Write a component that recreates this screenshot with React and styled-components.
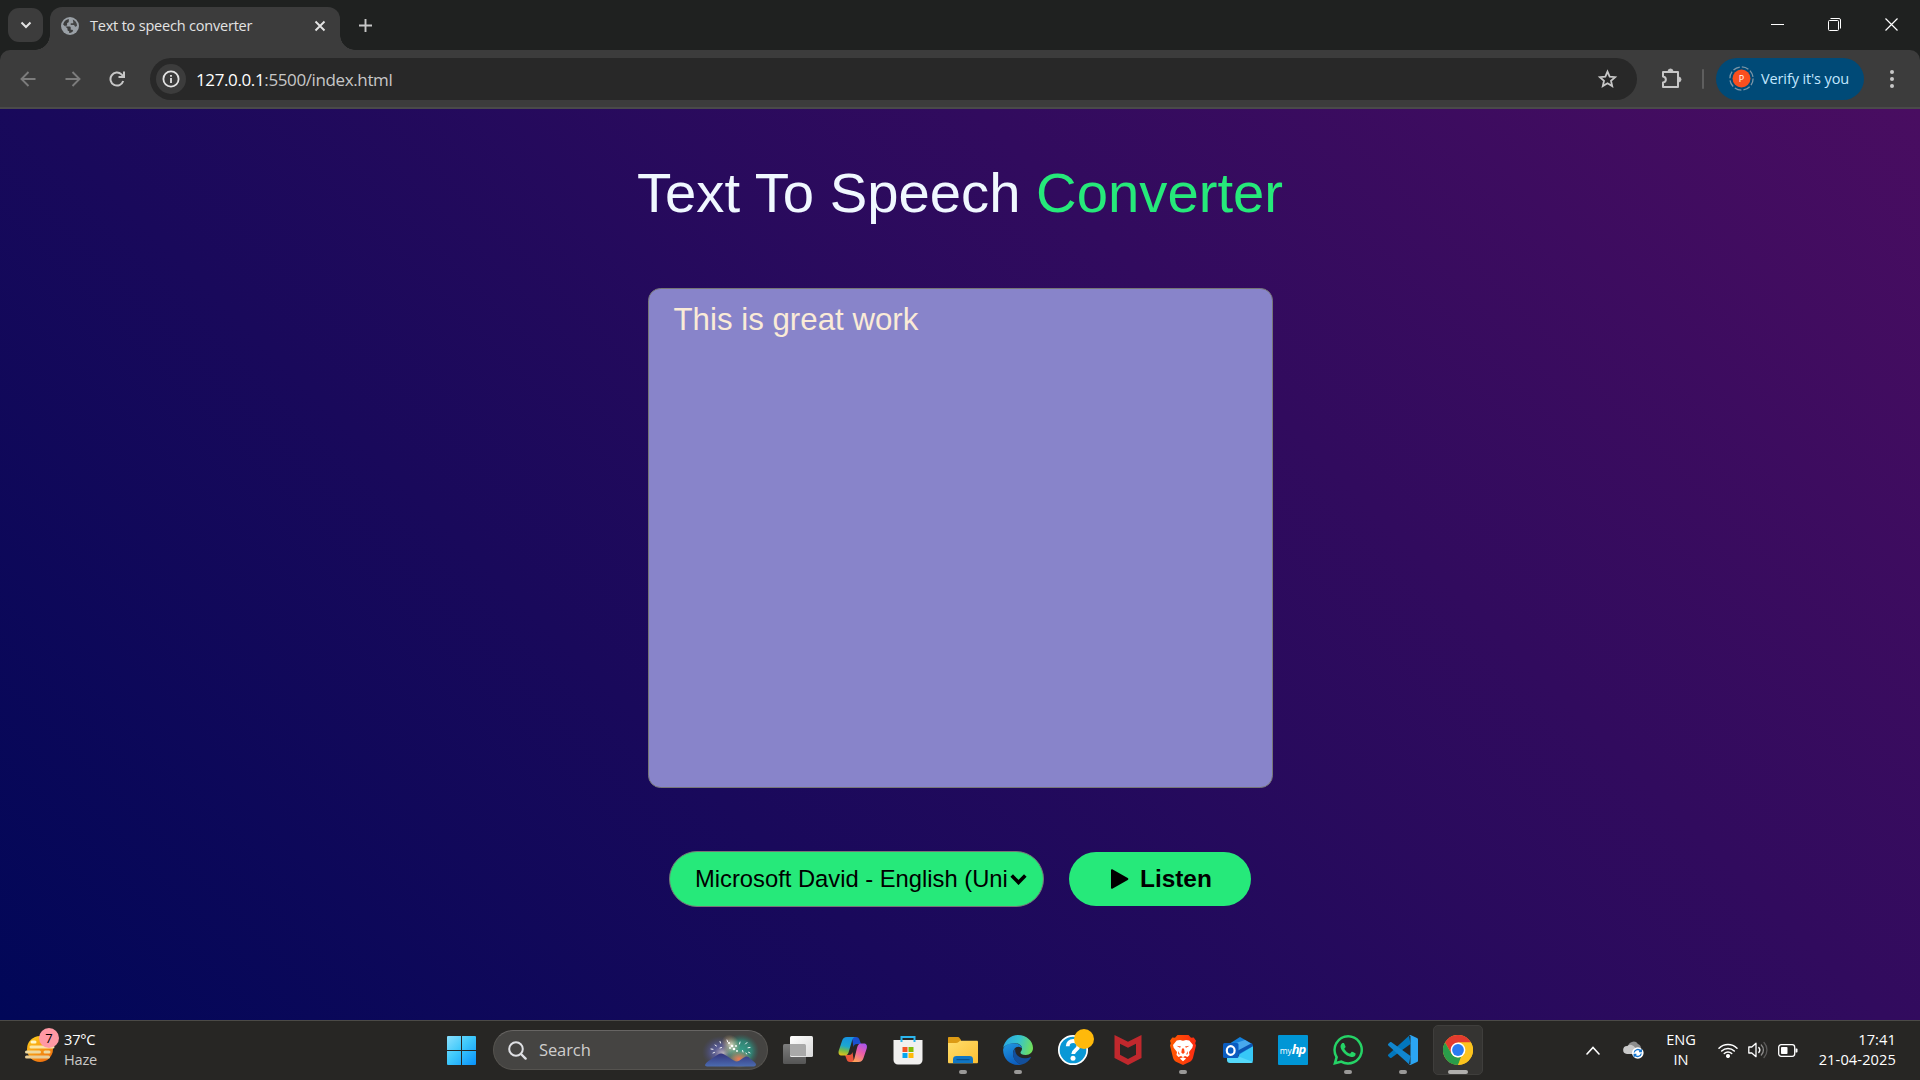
import React from 'react';
import styled, { createGlobalStyle, css } from 'styled-components';

const GlobalStyle = createGlobalStyle`
  *, *::before, *::after { box-sizing: border-box; }
  html, body { margin: 0; padding: 0; background: #1f2120; overflow: hidden; }
  svg { display: block; flex: none; }
`;

const uiFont = css`font-family: "Open Sans", "Noto Sans", sans-serif;`;
const pageFont = css`font-family: "Liberation Sans", Arial, sans-serif;`;

const Screen = styled.div`
  width: 1920px;
  height: 1080px;
  display: flex;
  flex-direction: column;
  overflow: hidden;
`;

/* ---------- browser chrome ---------- */
const TabStrip = styled.header`
  height: 50px;
  flex: none;
  display: flex;
  align-items: flex-end;
  background: #1f2120;
  padding-left: 8px;
`;
const TabSearch = styled.button`
  width: 35px;
  height: 34px;
  margin: 0 7px 8px 0;
  padding: 0;
  border: 0;
  border-radius: 11px;
  background: #3c3c3c;
  display: grid;
  place-items: center;
`;
const Tab = styled.div`
  position: relative;
  width: 290px;
  height: 43px;
  border-radius: 12px 12px 0 0;
  background: #3c3c3c;
  display: flex;
  align-items: center;
  padding: 0 14px 6px 11px;
  &::before, &::after {
    content: '';
    position: absolute;
    bottom: 0;
    width: 15px;
    height: 15px;
  }
  &::before { left: -15px; background: radial-gradient(circle at 0 0, transparent 14.5px, #3c3c3c 15px); }
  &::after { right: -15px; background: radial-gradient(circle at 100% 0, transparent 14.5px, #3c3c3c 15px); }
`;
const TabTitle = styled.span`
  ${uiFont}
  flex: 1;
  margin-left: 11px;
  font-size: 14.5px;
  line-height: 20px;
  letter-spacing: -0.2px;
  color: #e3e3e3;
  white-space: nowrap;
`;
const NewTab = styled.div`
  width: 28px;
  height: 50px;
  margin-left: 11px;
  display: grid;
  place-items: center;
`;
const WindowControls = styled.div`
  margin-left: auto;
  height: 50px;
  display: flex;
`;
const WindowButton = styled.div`
  width: 57px;
  height: 49px;
  display: grid;
  place-items: center;
`;
const ToolbarBack = styled.div`
  height: 59px;
  flex: none;
  background: #1f2120;
`;
const Toolbar = styled.div`
  height: 59px;
  background: #3c3c3c;
  border-bottom: 2px solid #4a4a4a;
  border-radius: 10px 10px 0 0;
  display: flex;
  align-items: center;
  padding-left: 5px;
`;
const NavButton = styled.div`
  width: 45px;
  height: 57px;
  display: grid;
  place-items: center;
`;
const Omnibox = styled.div`
  width: 1487px;
  height: 42px;
  margin-left: 10px;
  border-radius: 21px;
  background: #282828;
  display: flex;
  align-items: center;
  padding: 0 19px 0 6px;
`;
const SiteInfo = styled.span`
  width: 30px;
  height: 30px;
  border-radius: 50%;
  background: #3c3c3c;
  display: grid;
  place-items: center;
`;
const Url = styled.span`
  ${uiFont}
  flex: 1;
  margin: 2px 0 0 10px;
  font-size: 17px;
  line-height: 24px;
  letter-spacing: -0.38px;
  color: #c7c7c7;
  b { font-weight: 400; color: #ffffff; }
`;
const Extensions = styled.div`
  width: 65px;
  display: flex;
  justify-content: center;
  padding-left: 5px;
`;
const Divider = styled.span`
  width: 2px;
  height: 20px;
  border-radius: 1px;
  background: #5e5e5e;
`;
const ProfileChip = styled.div`
  width: 148px;
  height: 42px;
  margin: 0 0 0 12px;
  border-radius: 21px;
  background: #004a77;
  display: flex;
  align-items: center;
  padding-left: 13px;
  gap: 7px;
`;
const ChipText = styled.span`
  ${uiFont}
  font-size: 14.5px;
  line-height: 20px;
  letter-spacing: -0.12px;
  color: #c2e7ff;
  white-space: nowrap;
`;
const Avatar = styled.span`
  position: relative;
  width: 25px;
  height: 25px;
  display: grid;
  place-items: center;
  svg { position: absolute; inset: 0; }
`;
const AvatarLetter = styled.span`
  ${uiFont}
  z-index: 1;
  font-size: 9px;
  line-height: 12px;
  color: #ffffff;
`;
const MenuDots = styled.div`
  width: 56px;
  display: grid;
  place-items: center;
`;

/* ---------- page ---------- */
const Page = styled.main`
  ${pageFont}
  height: 911px;
  flex: none;
  background: linear-gradient(45deg, #010758, #490d61);
  display: flex;
  flex-direction: column;
  align-items: center;
`;
const Heading = styled.h1`
  margin: 52px 0 0;
  height: 64px;
  font-size: 56.25px;
  line-height: 64px;
  font-weight: 400;
  color: aliceblue;
  white-space: nowrap;
  span { color: #26e97a; }
`;
const TextBox = styled.div`
  width: 625px;
  height: 500px;
  margin-top: 63px;
  padding: 13px 25px;
  border: 1px solid #767676;
  border-radius: 12.5px;
  background: #8884ca;
  font-size: 31.25px;
  line-height: 36px;
  color: antiquewhite;
`;
const Controls = styled.div`
  display: flex;
  align-items: center;
  gap: 25px;
  margin-top: 63px;
`;
const VoiceSelect = styled.div`
  width: 375px;
  height: 56px;
  border: 1px solid #767676;
  border-radius: 28px;
  background: #26e97a;
  display: flex;
  align-items: center;
  padding: 0 16px 0 25px;
`;
const VoiceName = styled.span`
  width: 315px;
  white-space: nowrap;
  font-size: 23.75px;
  line-height: 30px;
  color: #000;
`;
const ListenButton = styled.button`
  ${pageFont}
  width: 182px;
  height: 54px;
  padding: 0 0 1px 42px;
  border: 0;
  border-radius: 27px;
  background: #26e97a;
  display: flex;
  align-items: center;
  gap: 11px;
  font-size: 24.4px;
  font-weight: 700;
  line-height: 30px;
  color: #000;
`;

/* ---------- taskbar ---------- */
const Taskbar = styled.footer`
  height: 60px;
  flex: none;
  display: flex;
  align-items: center;
  padding-bottom: 1px;
  background: #272624;
  border-top: 1px solid #4b4a47;
`;
const Weather = styled.div`
  width: 447px;
  display: flex;
  align-items: center;
  padding-left: 25px;
  gap: 5px;
`;
const WeatherIcon = styled.div`
  position: relative;
  width: 34px;
  height: 40px;
`;
const Badge = styled.span`
  ${uiFont}
  position: absolute;
  left: 14px;
  top: -2px;
  width: 20px;
  height: 20px;
  border-radius: 50%;
  background: #ff99a4;
  font-size: 13px;
  line-height: 20px;
  text-align: center;
  color: #000;
`;
const Lines = styled.div`
  ${uiFont}
  width: ${(p) => p.$width || 'auto'};
  margin-top: -2px;
  display: flex;
  flex-direction: column;
  text-align: ${(p) => p.$align || 'left'};
  font-size: 14.6px;
  line-height: 20px;
  letter-spacing: ${(p) => p.$track || '-0.2px'};
  color: #fff;
  white-space: nowrap;
`;
const Muted = styled.span`color: #c9c8c7;`;
const SearchBox = styled.div`
  width: 275px;
  height: 40px;
  margin: 0 2px 0 17px;
  border: 1px solid #55534f;
  border-top-color: #676563;
  border-radius: 20px;
  background: #454442;
  display: flex;
  align-items: center;
  padding: 0 7px 0 14px;
  span {
    ${uiFont}
    flex: 1;
    margin-left: 12px;
    font-size: 16.5px;
    line-height: 24px;
    letter-spacing: -0.1px;
    color: #cfcecd;
  }
`;
const AppSlot = styled.div`
  width: 55px;
  height: 58px;
  display: flex;
  justify-content: center;
  align-items: center;
`;
const AppTile = styled.div`
  position: relative;
  width: 50px;
  height: 50px;
  border-radius: 5px;
  border: 1px solid ${(p) => (p.$active ? '#3f3e3c' : 'transparent')};
  background: ${(p) => (p.$active ? '#353432' : 'transparent')};
  display: grid;
  place-items: center;
`;
const Running = styled.span`
  position: absolute;
  bottom: 0;
  left: 50%;
  width: ${(p) => (p.$active ? '20px' : '8px')};
  height: 4px;
  border-radius: 2px;
  background: ${(p) => (p.$active ? '#b0afad' : '#9a9998')};
  transform: translateX(-50%);
`;
const Tray = styled.div`
  flex: 1;
  display: flex;
  align-items: center;
  padding-left: 101px;
`;
const TrayItem = styled.span`
  margin-left: ${(p) => p.$gap}px;
  display: block;
`;
const HpLogo = styled.div`
  ${uiFont}
  width: 30px;
  height: 30px;
  background: #0096d6;
  border-radius: 1px;
  color: #fff;
  display: flex;
  align-items: baseline;
  justify-content: center;
  font-size: 8.5px;
  line-height: 28px;
  font-weight: 400;
  i { font-size: 13px; letter-spacing: -1px; font-weight: 700; }
`;

const Stroke = ({ w, h = w, d, color = '#c7c7c7', sw = 2, cap = 'butt' }) => (
  <svg width={w} height={h} viewBox={`0 0 ${w} ${h}`} fill="none" stroke={color} strokeWidth={sw} strokeLinecap={cap}>
    <path d={d} />
  </svg>
);

const Globe = () => (
  <svg width="18" height="18" viewBox="0 0 18 18">
    <circle cx="9" cy="9" r="9" fill="#9aa0a6" />
    <path d="M7.8 1.9v2.400c0 1-.8 1.700-1.700 1.700v1.700c0 .6-.4 1-.9 1H4.100v.9h4.700c.5 0 .9.4.9.9v2.200h.9c.8 0 1.400.5 1.600 1.200A7 7 0 0 1 9 16c-.5 0-.8 0-.8-.1v-1.700c-1 0-1.700-.8-1.700-1.700v-.9L2.100 7.400A7.200 7.200 0 0 1 7.800 1.900z" fill="#3c3c3c" />
    <path d="M11.800 2.600c2.400 1 4.100 3.200 4.300 6-.5 1-1.300 1.300-2.100.9l-1-1.500H9.700V6.300h1.700c.5 0 .9-.4.900-.900z" fill="#3c3c3c" opacity=".9" />
  </svg>
);

const WeatherSun = () => (
  <svg width="34" height="40" viewBox="0 0 34 40">
    <defs>
      <linearGradient id="sun" x1="0" y1="0" x2=".6" y2="1"><stop offset="0" stopColor="#ffd21c" /><stop offset="1" stopColor="#f0730f" /></linearGradient>
    </defs>
    <circle cx="15" cy="19" r="13" fill="url(#sun)" />
    <g stroke="#fbe6a6" strokeWidth="3" strokeLinecap="round">
      <path d="M7 12h3" stroke="#fff6c9" /><path d="M6 17h22" /><path d="M1.500 22h13M20 22h4" stroke="#edd9a0" /><path d="M1.500 27h22" stroke="#e9cd95" />
    </g>
  </svg>
);

const WinLogo = () => (
  <svg width="29" height="29" viewBox="0 0 29 29">
    <defs><linearGradient id="win" x1="0" y1="0" x2="1" y2="1"><stop offset="0" stopColor="#8be0fd" /><stop offset=".45" stopColor="#3fc9fb" /><stop offset="1" stopColor="#0791fb" /></linearGradient></defs>
    <path d="M1 0h13v14H0V1a1 1 0 0 1 1-1zM15 0h13a1 1 0 0 1 1 1v13H15zM0 15h14v14H1a1 1 0 0 1-1-1zM15 15h14v13a1 1 0 0 1-1 1H15z" fill="url(#win)" />
  </svg>
);

const Fireworks = () => (
  <svg width="58" height="38" viewBox="0 0 58 38">
    <defs>
      <radialGradient id="fwA"><stop offset="0" stopColor="#686cae" /><stop offset=".5" stopColor="#55588f" stopOpacity=".85" /><stop offset="1" stopColor="#454870" stopOpacity="0" /></radialGradient>
      <radialGradient id="fwB"><stop offset="0" stopColor="#35a08a" /><stop offset=".6" stopColor="#2f8b7b" stopOpacity=".85" /><stop offset="1" stopColor="#2f6b62" stopOpacity="0" /></radialGradient>
      <radialGradient id="fwC"><stop offset="0" stopColor="#fff0d4" /><stop offset="1" stopColor="#e1b87c" stopOpacity="0" /></radialGradient>
      <radialGradient id="fwD"><stop offset="0" stopColor="#f07a52" /><stop offset="1" stopColor="#e0825c" stopOpacity="0" /></radialGradient>
      <linearGradient id="fwM" x1="0" y1="0" x2="0" y2="1"><stop offset="0" stopColor="#33347c" /><stop offset="1" stopColor="#4c6cb0" /></linearGradient>
    </defs>
    <ellipse cx="18" cy="21" rx="18" ry="16" fill="url(#fwA)" />
    <ellipse cx="39" cy="20" rx="18" ry="17" fill="url(#fwB)" />
    <ellipse cx="21" cy="22" rx="9" ry="7" fill="url(#fwC)" opacity=".55" />
    <ellipse cx="29" cy="14" rx="9" ry="11" fill="url(#fwC)" opacity=".8" transform="rotate(-35 29 14)" />
    <ellipse cx="37" cy="28" rx="12" ry="9" fill="url(#fwD)" />
    <path d="M3 34c1-3 6-5.500 10-8.500 2-1.500 4-3 6-3s5 2 8 4 6 4 8 4 5-3 8-4.500c2-1 4 0 5 1.500 2 2 6 4 6 6 0 1.500-1.500 2-3 2H7c-2.500 0-4 0-4-1.500z" fill="url(#fwM)" />
    <g stroke="#fff" strokeWidth="1" strokeLinecap="round" opacity=".95">
      <path d="M18 10.500l.5 1.500M13 14l1.500 1M9 18l2 .3M11 22l1.500-.6M18 17l1.500-.5M25 9l.6 1.800M38 11l-.5 2M45 11.500l-1.500 1.500M48 16.500l-2 .3M48 22l-1.500-.8M41 21l-.4-1.500M44 22l.6 1" />
    </g>
    <g fill="#fff">
      <circle cx="27" cy="12" r="1" /><circle cx="30" cy="15" r="1.300" /><circle cx="32" cy="18" r="1.300" /><circle cx="28" cy="17" r=".9" /><circle cx="34" cy="15" r=".9" /><circle cx="35" cy="20" r=".9" />
    </g>
  </svg>
);

const TaskView = () => (
  <svg width="30" height="30" viewBox="0 0 30 30">
    <defs><linearGradient id="tv" x1="0" y1="0" x2="1" y2="1"><stop offset="0" stopColor="#fff" /><stop offset="1" stopColor="#d9d9d9" /></linearGradient>
      <linearGradient id="tg" x1="0" y1="0" x2="0" y2="1"><stop offset="0" stopColor="#7d7d7d" /><stop offset="1" stopColor="#555" /></linearGradient></defs>
    <rect x="0" y="9" width="23" height="20" rx="1.500" fill="url(#tg)" />
    <rect x="7" y="1" width="23" height="21" rx="1.500" fill="url(#tv)" />
    <path d="M7 9h14.500a1.500 1.500 0 0 1 1.500 1.500V21H8.500A1.500 1.500 0 0 1 7 19.500z" fill="#a9a9a9" />
  </svg>
);

const Copilot = () => (
  <svg width="30" height="30" viewBox="0 0 30 30">
    <defs>
      <linearGradient id="cpA" x1=".3" y1="0" x2=".1" y2="1"><stop offset="0" stopColor="#1793e0" /><stop offset=".45" stopColor="#1ca7cf" /><stop offset=".7" stopColor="#72bb4c" /><stop offset="1" stopColor="#f2c412" /></linearGradient>
      <linearGradient id="cpB" x1=".8" y1="0" x2=".3" y2="1"><stop offset="0" stopColor="#a855ee" /><stop offset=".45" stopColor="#e95caa" /><stop offset="1" stopColor="#ffa357" /></linearGradient>
    </defs>
    <path d="M14 2h4c2 0 3 1 3.600 3l1.400 4h-4c-2 0-3 1-3.600 3z" fill="#1a50d0" />
    <path d="M16 27h-4c-2 0-3-1-3.500-3L7 20h4c2 0 3-1 3.500-3z" fill="#e8553a" />
    <path d="M9 2h8.500c-2 0-2.800 1.600-3.400 3.500L11 16c-.8 2.800-1.700 4.500-4 4.500H4c-3 0-4-2-3.200-5L4 6c.9-2.700 2.200-4 5-4z" fill="url(#cpA)" />
    <path d="M20.500 27H13c2 0 2.800-1.500 3.400-3.500L19 13c.8-2.800 1.700-4.500 4-4.500h2.500c3 0 4 2 3.200 5L25.500 23c-.9 2.700-2.200 4-5 4z" fill="url(#cpB)" />
  </svg>
);

const Store = () => (
  <svg width="30" height="30" viewBox="0 0 30 30">
    <path d="M0.500 5h29v20a4.500 4.500 0 0 1-4.500 4.500H5A4.500 4.500 0 0 1 .5 25z" fill="#f1f0ef" />
    <path d="M8.500 7V2h13v5" fill="none" stroke="#2bb6ee" strokeWidth="2" />
    <path d="M9.500 12h5v5h-5z" fill="#f35325" /><path d="M15.500 12h5v5h-5z" fill="#81bc06" /><path d="M9.500 18h5v5h-5z" fill="#05a6f0" /><path d="M15.500 18h5v5h-5z" fill="#ffba08" />
  </svg>
);

const Explorer = () => (
  <svg width="30" height="30" viewBox="0 0 30 30">
    <defs><linearGradient id="ex" x1="0" y1="0" x2="1" y2="1"><stop offset="0" stopColor="#ffdd6b" /><stop offset="1" stopColor="#fcbf33" /></linearGradient></defs>
    <path d="M0 3c0-.6.500-1 1-1h8.500c1 0 1.500.3 2 1l1.500 2v6H0z" fill="#dc9a14" />
    <path d="M0 8h8c1 0 1.800-.3 2.600-1l1.400-1.200h16.800c.7 0 1.200.4 1.200 1.200v20c0 .8-.5 1.300-1.300 1.300H1.300C.5 28.300 0 27.800 0 27z" fill="url(#ex)" />
    <path d="M5 28.300v-4A3.500 3.500 0 0 1 8.500 21h13a3.500 3.500 0 0 1 3.500 3.300v4z" fill="#1076c4" />
    <path d="M8.500 24.700h13" stroke="#064a86" strokeWidth="1" />
  </svg>
);

const Edge = () => (
  <svg width="30" height="30" viewBox="0 0 30 30">
    <defs>
      <linearGradient id="edA" x1="0" y1=".3" x2="1" y2=".5"><stop offset="0" stopColor="#2aa6e2" /><stop offset=".5" stopColor="#35c3cf" /><stop offset="1" stopColor="#71e05a" /></linearGradient>
      <linearGradient id="edB" x1=".2" y1="0" x2=".6" y2="1"><stop offset="0" stopColor="#1f95df" /><stop offset="1" stopColor="#0b5bbd" /></linearGradient>
    </defs>
    <path d="M.2 13C1.300 5.700 7.300 0 15 0c8.500 0 15 6 15 13 0 4-3 7-7.300 7-3.700 0-5.200-1.300-5.200-2.500 0-.8 1.500-1.600 1.500-4 0-2.700-2.800-5.200-7-5.200C6.500 8.300 2 10.500.2 13z" fill="url(#edA)" />
    <path d="M.1 14.500C1 10.300 5.800 8.300 11 8.300c4.800 0 8 2.500 8 5 0 0-1.700-1.600-3.700-1.600C12.500 11.700 10 14.500 10 18.500 10 24 14 29 19.500 29.200 18 29.700 16.600 30 15 30 6.700 30 .1 23.500.1 15z" fill="url(#edB)" />
    <path d="M12.200 13.500C10.700 15 10 16.800 10 19c0 5.500 4.200 10.300 9.800 10.300 3.500-1.200 6.200-3.600 7.900-6.300.4-.8-.2-1.100-.8-.8-1.300.7-3 1.100-5 1.100-5.200 0-9.700-3.500-9.700-8z" fill="#134f9b" />
  </svg>
);

const Help = () => (
  <svg width="44" height="44" viewBox="-3 -3 44 44">
    <circle cx="19" cy="19" r="14.200" fill="#0a98d6" stroke="#fff" strokeWidth="1.700" />
    <path d="M13.700 15.200c0-3.300 2.300-5.200 5.500-5.200s5.300 1.900 5.300 4.700c0 4.200-5.300 4.300-5.300 8.300" fill="none" stroke="#fff" strokeWidth="3.800" />
    <circle cx="19" cy="27.200" r="2.500" fill="#fff" />
    <circle cx="30" cy="8" r="10" fill="#ffb90b" />
  </svg>
);

const McAfee = () => (
  <svg width="30" height="30" viewBox="0 0 30 30">
    <path d="M1.500 0L15 6.700 28.500 0v23L15 30 1.500 23zM7 8.800v11l8 4.200 8-4.200v-11l-8 4z" fill="#c0282d" fillRule="evenodd" />
  </svg>
);

const Brave = () => (
  <svg width="30" height="30" viewBox="0 0 30 30">
    <defs><linearGradient id="br" x1="0" y1="0" x2="1" y2="0"><stop offset="0" stopColor="#ff5a00" /><stop offset="1" stopColor="#fb2a12" /></linearGradient></defs>
    <path d="M9.500 0h11l2.500 2.700 2.700-.3L28 5.700l-.8 2.500.8 2.300-3 12.200c-.6 2-1.400 2.800-3 4L15 30l-7-3.300c-1.600-1.200-2.400-2-3-4L2 10.500l.8-2.300L2 5.700l2.300-3.300 2.700.3z" fill="url(#br)" />
    <path d="M15 5.800l3-.9 3.300.5 3.700 4.600-.7 2.700-3.300 4.400.5 3-2 1.800-2.500-1-2 1.300-2-1.300-2.500 1-2-1.800.5-3-3.300-4.400L5 10l3.700-4.600 3.300-.5zM15 22.200l3.200 1.300-3.200 2.700-3.200-2.700z" fill="#fff" />
    <path d="M8.500 10.800l4.500.6-1 1.400zM21.500 10.800l-4.500.6 1 1.400zM14 13.500h2l.7 4L15 19l-1.700-1.500zM10 16l2 3.500-1.700-.3zM20 16l-2 3.500 1.700-.3z" fill="#ff4512" />
  </svg>
);

const Outlook = () => (
  <svg width="30" height="30" viewBox="0 0 30 30">
    <path d="M6 9l11-7 11.500 6.500L30 11l-13 9L6 17z" fill="#1380dc" />
    <path d="M13 8l9-3 6.500 4L15 18z" fill="#48a9ee" />
    <path d="M30 11v14a3 3 0 0 1-3 3H10l7-9z" fill="#37c8f7" />
    <path d="M30 11L14 20v-4l15-8z" fill="#0b55b3" />
    <path d="M4 22h13l13 5c-.7.8-1.500 1-3 1H7a3 3 0 0 1-3-3z" fill="#55d9fa" />
    <rect x="0" y="8" width="15.500" height="15" rx="1.500" fill="#0a5cc0" />
    <ellipse cx="7.700" cy="15.500" rx="3.900" ry="4.400" fill="none" stroke="#fff" strokeWidth="2.200" />
  </svg>
);

const WhatsApp = () => (
  <svg width="30" height="30" viewBox="0 0 24 24" fill="#25d366">
    <path d="M17.472 14.382c-.297-.149-1.758-.867-2.030-.967-.273-.099-.471-.148-.670.150-.197.297-.767.966-.940 1.164-.173.199-.347.223-.644.075-.297-.150-1.255-.463-2.390-1.475-.883-.788-1.480-1.761-1.653-2.059-.173-.297-.018-.458.130-.606.134-.133.298-.347.446-.520.149-.174.198-.298.298-.497.099-.198.050-.371-.025-.520-.075-.149-.669-1.612-.916-2.207-.242-.579-.487-.500-.669-.510-.173-.008-.371-.010-.570-.010-.198 0-.520.074-.792.372-.272.297-1.040 1.016-1.040 2.479 0 1.462 1.065 2.875 1.213 3.074.149.198 2.096 3.200 5.077 4.487.709.306 1.262.489 1.694.625.712.227 1.360.195 1.871.118.571-.085 1.758-.719 2.006-1.413.248-.694.248-1.289.173-1.413-.074-.124-.272-.198-.570-.347" />
    <path fillRule="evenodd" d="M12.100 0A11.900 11.900 0 0 0 1.800 17.800L.1 24l6.300-1.650A11.900 11.900 0 1 0 12.100 0zm0 21.800a9.900 9.900 0 0 1-5-1.370l-.36-.21-3.740.98 1-3.650-.24-.37A9.900 9.900 0 1 1 12.100 21.800z" />
  </svg>
);

const VsCode = () => (
  <svg width="30" height="30" viewBox="0 0 30 30">
    <path d="M22.500 9L3.500 22.700c-.6.400-1 .4-1.500 0L.4 21.300c-.6-.5-.6-1.200 0-1.800L21 .8z" fill="#0277bd" />
    <path d="M22.500 21L3.500 7.300c-.6-.4-1-.4-1.500 0L.4 8.700c-.6.500-.6 1.200 0 1.800L21 29.200z" fill="#1186cf" />
    <path d="M22.500 0l6.500 3c.7.400 1 .8 1 1.600v20.800c0 .8-.3 1.200-1 1.600l-6.500 3c-.7.200-1.200 0-1.700-.6.800.5 1.700 0 1.700-1V1.600c0-1-.9-1.500-1.700-1 .5-.6 1-.8 1.700-.6z" fill="#2ba5f3" />
  </svg>
);

const ChromeLogo = () => (
  <svg width="30" height="30" viewBox="0 0 30 30">
    <circle cx="15" cy="15" r="15" fill="#fcc31e" />
    <path d="M2 7.500A15 15 0 0 1 28 7.500H15L8.500 18.700z" fill="#e33b2e" />
    <path d="M2 7.500L8.500 18.750a7.500 7.500 0 0 0 9.500 3L15 30A15 15 0 0 1 2 7.500z" fill="#2a9c4a" />
    <path d="M28 7.500A15 15 0 0 1 15 30l6.500-11.250L21.500 11 15 7.500z" fill="#fcc31e" />
    <circle cx="15" cy="15" r="7.400" fill="#fff" />
    <circle cx="15" cy="15" r="5.900" fill="#2a7bf0" />
  </svg>
);

const MyHp = () => (<HpLogo>my<i>hp</i></HpLogo>);

const apps = [
  { id: 'taskview', Icon: TaskView },
  { id: 'copilot', Icon: Copilot },
  { id: 'store', Icon: Store },
  { id: 'explorer', Icon: Explorer, running: true },
  { id: 'edge', Icon: Edge, running: true },
  { id: 'help', Icon: Help },
  { id: 'mcafee', Icon: McAfee },
  { id: 'brave', Icon: Brave, running: true },
  { id: 'outlook', Icon: Outlook },
  { id: 'myhp', Icon: MyHp },
  { id: 'whatsapp', Icon: WhatsApp, running: true },
  { id: 'vscode', Icon: VsCode, running: true },
  { id: 'chrome', Icon: ChromeLogo, running: true, active: true },
];

const BrowserChrome = () => (
  <>
    <TabStrip>
      <TabSearch><Stroke w={12} h={8} d="M1.500 1.500L6 6l4.500-4.500" color="#e3e3e3" sw={2} /></TabSearch>
      <Tab>
        <Globe />
        <TabTitle>Text to speech converter</TabTitle>
        <Stroke w={12} d="M1.500 1.500l9 9M10.500 1.500l-9 9" color="#e3e3e3" sw={1.900} />
      </Tab>
      <NewTab><Stroke w={13} d="M6.500 0v13M0 6.500h13" sw={1.900} /></NewTab>
      <WindowControls>
        <WindowButton><Stroke w={13} h={1} d="M0 .5h13" color="#fff" sw={1} /></WindowButton>
        <WindowButton>
          <svg width="14" height="13" viewBox="0 0 14 13" fill="none" stroke="#fff">
            <rect x=".5" y="2.500" width="10" height="10" rx="1" />
            <path d="M2.500 .5H11A1.500 1.500 0 0 1 12.500 2v8.500" />
          </svg>
        </WindowButton>
        <WindowButton><Stroke w={13} d="M.5 .5l12 12M12.500 .5l-12 12" color="#fff" sw={1.200} /></WindowButton>
      </WindowControls>
    </TabStrip>
    <ToolbarBack>
      <Toolbar>
        <NavButton><Stroke w={16} d="M15.500 8H2M8.500 1L1.500 8l7 7" color="#7c7c7c" sw={1.900} /></NavButton>
        <NavButton><Stroke w={16} d="M.5 8H14M7.500 1l7 7-7 7" color="#7c7c7c" sw={1.900} /></NavButton>
        <NavButton>
          <svg width="17" height="16" viewBox="0 0 17 16" fill="none" stroke="#c7c7c7" strokeWidth="2">
            <path d="M14.200 10a6.500 6.500 0 1 1-1.700-6.600L14.500 5.500M15 .5V6H9.500" />
          </svg>
        </NavButton>
        <Omnibox>
          <SiteInfo>
            <svg width="18" height="18" viewBox="0 0 18 18" fill="none" stroke="#e3e3e3" strokeWidth="1.800">
              <circle cx="9" cy="9" r="7.600" /><path d="M9 8v5M9 4.900v1.900" />
            </svg>
          </SiteInfo>
          <Url><b>127.0.0.1</b>:5500/index.html</Url>
          <svg width="21" height="20" viewBox="0 0 21 20" fill="none" stroke="#c7c7c7" strokeWidth="1.800" strokeLinejoin="miter">
            <path d="M10.500 2.600l2.150 5 5.450.5-4.100 3.600 1.200 5.350-4.700-2.850-4.700 2.850 1.200-5.350-4.100-3.600 5.450-.5z" />
          </svg>
        </Omnibox>
        <Extensions>
          <svg width="22" height="22" viewBox="0 0 22 22" fill="none" stroke="#c7c7c7" strokeWidth="2" strokeLinejoin="round">
            <path d="M2 4h15v15H2v-4.500c3.800-.5 3.800-5.500 0-6z" />
            <path d="M7 3.500a2.500 2.500 0 0 1 5 0zM17.500 9a2.500 2.500 0 0 1 0 5z" fill="#c7c7c7" strokeWidth="1" />
          </svg>
        </Extensions>
        <Divider />
        <ProfileChip>
          <Avatar>
            <svg width="25" height="25" viewBox="0 0 25 25">
              <circle cx="12.500" cy="12.500" r="11.600" fill="none" stroke="#7d97a8" strokeWidth="1.300" strokeDasharray="7 2.110" />
              <circle cx="12.500" cy="12.500" r="9" fill="#fa4f1e" />
            </svg>
            <AvatarLetter>P</AvatarLetter>
          </Avatar>
          <ChipText>Verify it's you</ChipText>
        </ProfileChip>
        <MenuDots>
          <svg width="4" height="18" viewBox="0 0 4 18" fill="#c7c7c7"><circle cx="2" cy="2" r="2" /><circle cx="2" cy="9" r="2" /><circle cx="2" cy="16" r="2" /></svg>
        </MenuDots>
      </Toolbar>
    </ToolbarBack>
  </>
);

const SystemTaskbar = () => (
  <Taskbar>
    <Weather>
      <WeatherIcon><WeatherSun /><Badge>7</Badge></WeatherIcon>
      <Lines><span>37°C</span><Muted>Haze</Muted></Lines>
    </Weather>
    <WinLogo />
    <SearchBox>
      <svg width="19" height="19" viewBox="0 0 19 19" fill="none" stroke="#dfe0e4" strokeWidth="2" strokeLinecap="round">
        <circle cx="8" cy="8" r="6.800" /><path d="M13 13l4.600 4.600" strokeWidth="2.400" />
      </svg>
      <span>Search</span>
      <Fireworks />
    </SearchBox>
    {apps.map(({ id, Icon, running, active }) => (
      <AppSlot key={id}>
        <AppTile $active={active}>
          <Icon />
          {running && <Running $active={active} />}
        </AppTile>
      </AppSlot>
    ))}
    <Tray>
      <Stroke w={14} h={9} d="M1 8l6-6.500L13 8" color="#fff" sw={1.600} cap="round" />
      <TrayItem $gap={23}>
        <svg width="21" height="18" viewBox="0 0 21 18">
          <path d="M5 6a5.500 5.500 0 0 1 10-3 5 5 0 0 1 3 5v4H8z" fill="#8d8d8d" />
          <path d="M4 13a4 4 0 0 1 .3-8A5 5 0 0 1 12 6.500L14 13z" fill="#c9c9c9" />
          <circle cx="14.800" cy="12" r="5.800" fill="#fff" />
          <path d="M11.200 11.500a3.700 3.700 0 0 1 6.600-1.500M18.300 12.500a3.700 3.700 0 0 1-6.600 1.500M18.300 8.300v2.200h-2.200M11.200 15.700v-2.200h2.200" fill="none" stroke="#1374cf" strokeWidth="1.300" />
        </svg>
      </TrayItem>
      <TrayItem $gap={22}><Lines $width="30px" $align="center" $track="-0.1px"><span>ENG</span><span>IN</span></Lines></TrayItem>
      <TrayItem $gap={22}>
        <svg width="20" height="16" viewBox="0 0 20 16" fill="none" stroke="#fff" strokeWidth="1.500" strokeLinecap="round">
          <path d="M1 6.200a13 13 0 0 1 18 0M3.700 9a9 9 0 0 1 12.600 0M6.300 11.500a5.300 5.300 0 0 1 7.400 0" />
          <circle cx="10" cy="14" r="1.300" fill="#fff" />
        </svg>
      </TrayItem>
      <TrayItem $gap={10}>
        <svg width="20" height="18" viewBox="0 0 20 18" fill="none" stroke="#fff" strokeWidth="1.300" strokeLinecap="round" strokeLinejoin="round">
          <path d="M.8 6h3L8 2.300v13.400L3.800 12h-3z" />
          <path d="M10.800 6.500a3.800 3.800 0 0 1 0 5" />
          <path d="M13.300 4a7 7 0 0 1 0 10" stroke="#8d8c8b" /><path d="M16 1.500a11 11 0 0 1 0 15" stroke="#5c5b5a" />
        </svg>
      </TrayItem>
      <TrayItem $gap={10}>
        <svg width="20" height="13" viewBox="0 0 20 13" fill="none" stroke="#fff" strokeWidth="1.300">
          <rect x=".7" y=".7" width="16" height="11.600" rx="2.500" />
          <rect x="3" y="3" width="6.500" height="7" rx=".8" fill="#fff" stroke="none" />
          <path d="M17.500 4.500h1c.7 0 1 .3 1 1v2c0 .7-.3 1-1 1h-1z" fill="#fff" stroke="none" />
        </svg>
      </TrayItem>
      <TrayItem $gap={16}><Lines $width="82px" $align="right" $track="0.12px"><span>17:41</span><span>21-04-2025</span></Lines></TrayItem>
    </Tray>
  </Taskbar>
);

export default function App() {
  return (
    <>
      <GlobalStyle />
      <Screen>
        <BrowserChrome />
        <Page>
          <Heading>Text To Speech <span>Converter</span></Heading>
          <TextBox>This is great work</TextBox>
          <Controls>
            <VoiceSelect>
              <VoiceName>Microsoft David - English (Uni</VoiceName>
              <Stroke w={17} h={12} d="M1.700 2.500l6.800 7 6.800-7" color="#000" sw={3.600} />
            </VoiceSelect>
            <ListenButton>
              <svg width="18" height="20" viewBox="0 0 18 20"><path d="M0 1.200C0 .2 1 0 1.700.4l15 8.600c.9.500.9 1.500 0 2l-15 8.600C1 20 0 19.800 0 18.800z" /></svg>
              Listen
            </ListenButton>
          </Controls>
        </Page>
        <SystemTaskbar />
      </Screen>
    </>
  );
}
